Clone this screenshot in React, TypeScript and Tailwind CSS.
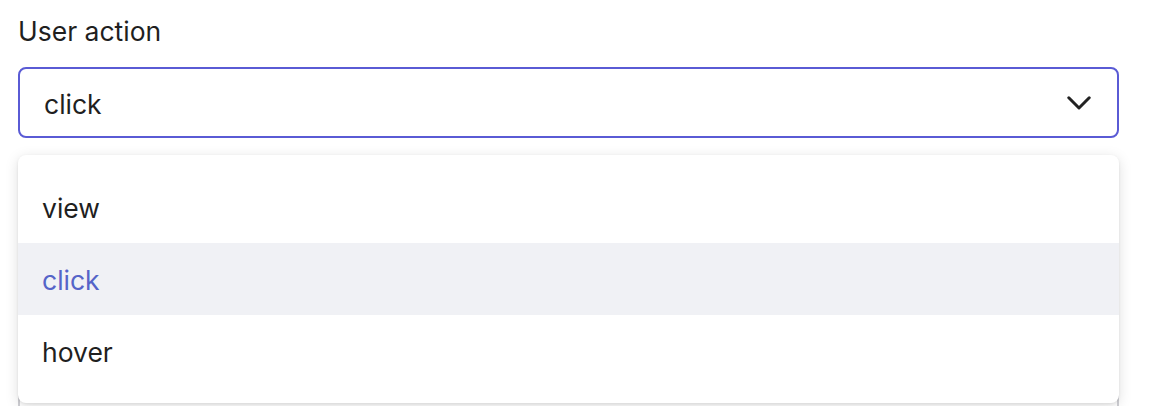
import React from "react";

export default function App() {
  return (
    <div
      className="relative w-[1152px] h-[406px] overflow-hidden bg-white text-[#1f1f1f]"
      style={{ fontFamily: "Inter, 'Noto Sans', sans-serif" }}
    >
      <div className="pl-[18px] pr-[33px]">
        <div className="pt-[15px] text-[26.5px] leading-[32px]">User action</div>
        <div className="relative mt-[20px]">
          <div className="h-[71px] border-2 border-[#5a5bd5] rounded-[8px] flex items-center justify-between pl-[24px] pr-[26px] bg-white">
            <span className="text-[26.5px] leading-[32px] pt-[2px]">click</span>
            <svg width="24" height="14" viewBox="0 0 24 14" fill="none">
              <path
                d="M1.8 1.8 L12 12 L22.2 1.8"
                stroke="#222"
                strokeWidth="3"
                strokeLinecap="round"
                strokeLinejoin="round"
              />
            </svg>
          </div>
          <div className="absolute left-0 right-0 top-[88px] z-10 rounded-[8px] bg-white py-[16px] shadow-[0_3px_14px_rgba(0,0,0,0.13),0_1px_3px_rgba(0,0,0,0.08)]">
            <div className="h-[72px] flex items-center pl-[24px] pt-[2px] text-[26.5px] leading-[32px]">view</div>
            <div className="h-[72px] flex items-center pl-[24px] pt-[2px] text-[26.5px] leading-[32px] bg-[#f0f1f5] text-[#5564c8]">click</div>
            <div className="h-[72px] flex items-center pl-[24px] pt-[2px] text-[26.5px] leading-[32px]">hover</div>
          </div>
          <div className="mt-[246px] h-[60px] border-2 border-[#cfcfd4] rounded-[8px] bg-white"></div>
        </div>
      </div>
    </div>
  );
}
